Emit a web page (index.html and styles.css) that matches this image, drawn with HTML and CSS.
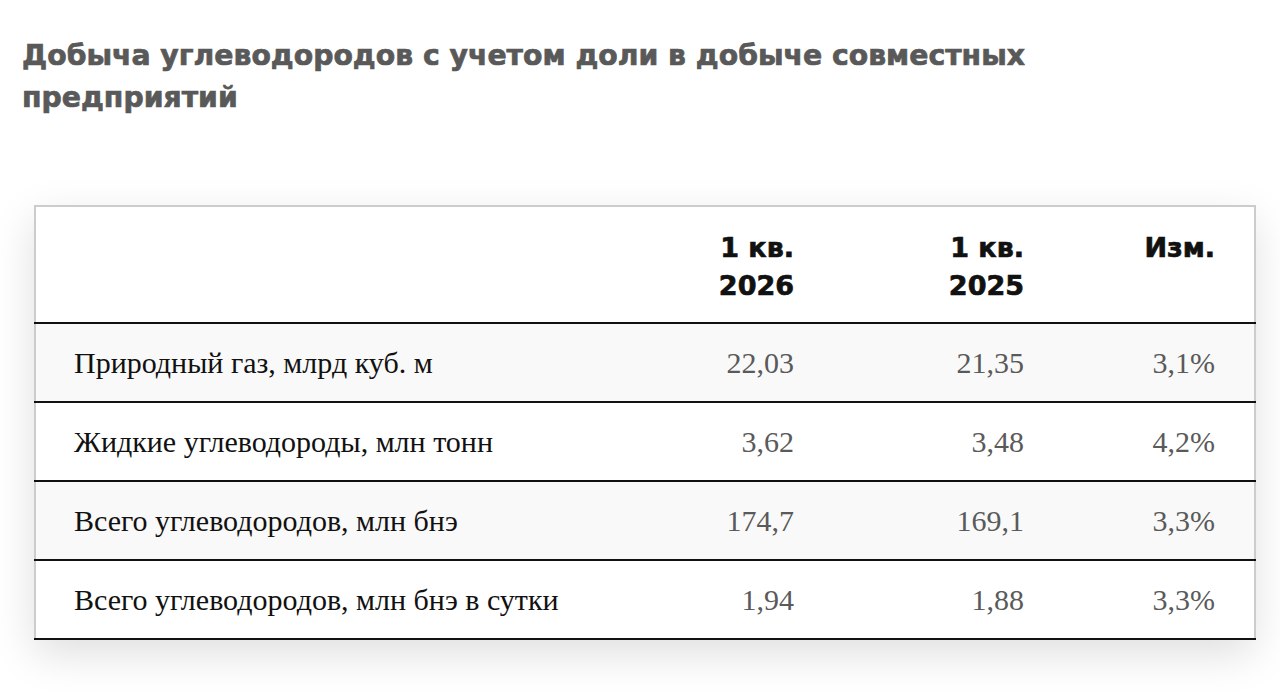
FILE: index.html
```html
<!DOCTYPE html>
<html lang="ru">
<head>
<meta charset="utf-8">
<title>Добыча углеводородов</title>
<link rel="stylesheet" href="styles.css">
</head>
<body>
<div class="page">
  <h1 class="title">Добыча углеводородов с учетом доли в добыче совместных предприятий</h1>
  <div class="table-wrap">
    <table class="data">
      <colgroup>
        <col class="c1"><col class="c2"><col class="c3"><col class="c4">
      </colgroup>
      <thead>
        <tr>
          <th class="lab"></th>
          <th>1 кв.<br>2026</th>
          <th>1 кв.<br>2025</th>
          <th>Изм.</th>
        </tr>
      </thead>
      <tbody>
        <tr class="alt"><td class="lab">Природный газ, млрд куб. м</td><td>22,03</td><td>21,35</td><td>3,1%</td></tr>
        <tr><td class="lab">Жидкие углеводороды, млн тонн</td><td>3,62</td><td>3,48</td><td>4,2%</td></tr>
        <tr class="alt"><td class="lab">Всего углеводородов, млн бнэ</td><td>174,7</td><td>169,1</td><td>3,3%</td></tr>
        <tr><td class="lab">Всего углеводородов, млн бнэ в сутки</td><td>1,94</td><td>1,88</td><td>3,3%</td></tr>
      </tbody>
    </table>
  </div>
</div>
</body>
</html>
```
FILE: styles.css
```css
html, body {
  margin: 0;
  padding: 0;
  background: #ffffff;
}
.page {
  box-sizing: border-box;
  min-height: 697px;
  padding: 35px 26px 58px 22px;
}
.title {
  margin: 0;
  width: 1060px;
  font-family: "DejaVu Sans", "Noto Sans", sans-serif;
  font-weight: 700;
  font-size: 28.3px;
  line-height: 42px;
  color: #595959;
  -webkit-text-stroke: 0.7px #595959;
}
.table-wrap {
  margin-top: 86px;
  margin-left: 12px;
  width: 1220px;
  box-shadow: 0 14px 40px rgba(0, 0, 0, 0.13);
}
.data {
  width: 100%;
  border-collapse: collapse;
  table-layout: fixed;
  background: #fff;
  border-top: 2px solid #cccccc;
  border-left: 2px solid #cccccc;
  border-right: 2px solid #cccccc;
}
.c1 { width: 568px; }
.c2 { width: 230px; }
.c3 { width: 230px; }
.c4 { width: 192px; }
.data th {
  font-family: "DejaVu Sans", "Noto Sans", sans-serif;
  font-weight: 700;
  font-size: 27px;
  line-height: 38px;
  color: #111;
  -webkit-text-stroke: 0.7px #111;
  text-align: right;
  vertical-align: top;
  padding: 22px 39px 17px 0;
  height: 76px;
  border-bottom: 2px solid #111;
}
.data td {
  font-family: "Liberation Serif", "Times New Roman", serif;
  font-size: 30px;
  color: #5a5a5a;
  text-align: right;
  padding: 0 39px 0 0;
  height: 77px;
  border-bottom: 2px solid #111;
}
.data td.lab {
  text-align: left;
  padding-left: 38px;
  color: #111;
}
.data tr.alt td {
  background: #f9f9f9;
}
```
